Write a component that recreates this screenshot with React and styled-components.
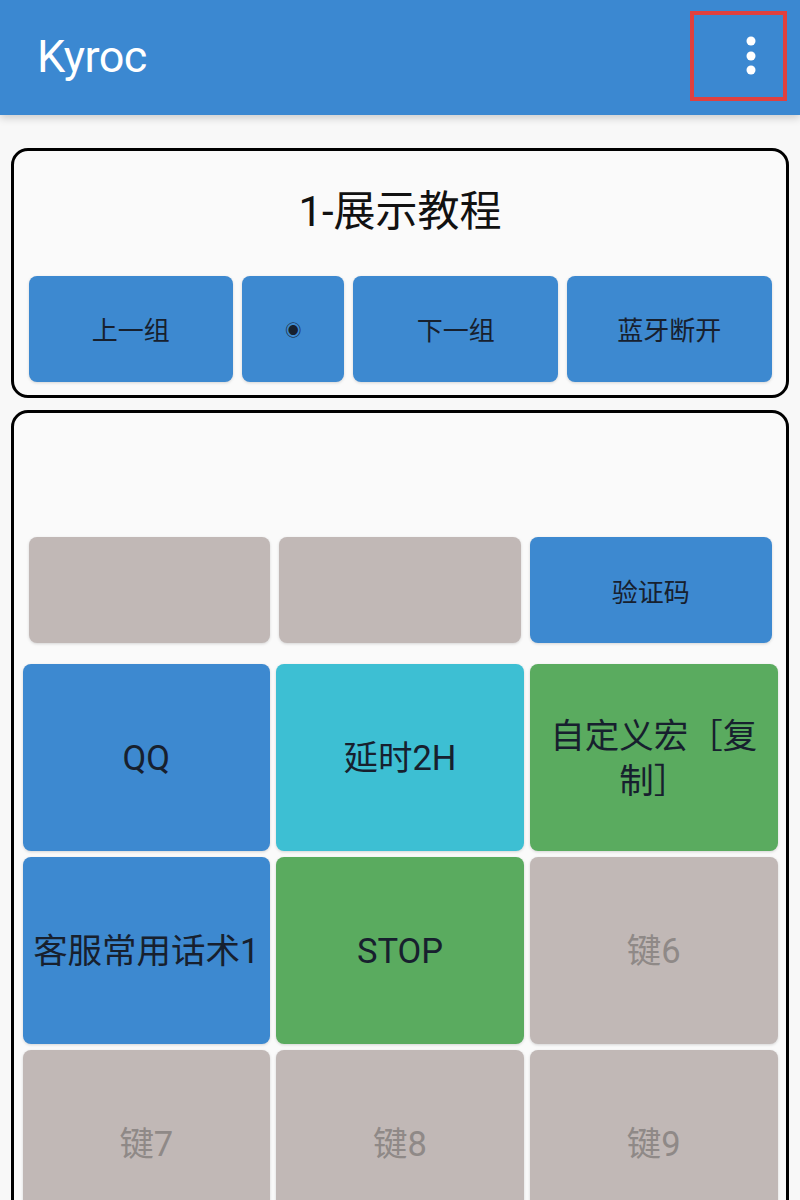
import styled, { createGlobalStyle } from "styled-components"

const GlobalStyle = createGlobalStyle`
  html, body {
    margin: 0;
    padding: 0;
    background: #f8f8f8;
    font-family: Roboto, "Noto Sans CJK SC", sans-serif;
  }
  body { overflow: hidden; height: 1200px; }
`

const colors = {
  blue: "#3d89d0",
  cyan: "#3dbfd3",
  green: "#5aab5f",
  gray: "#c1b8b6",
}

const topButtons = [
  { text: "上一组", grow: 2 },
  { text: "◉", grow: 1, small: true },
  { text: "下一组", grow: 2 },
  { text: "蓝牙断开", grow: 2 },
]

const shortcutRow = [
  { text: "", color: "gray" },
  { text: "", color: "gray" },
  { text: "验证码", color: "blue" },
]

const keys = [
  { text: "QQ", color: "blue" },
  { text: "延时2H", color: "cyan" },
  { text: "自定义宏［复制］", color: "green" },
  { text: "客服常用话术1", color: "blue" },
  { text: "STOP", color: "green" },
  { text: "键6", color: "gray", muted: true },
  { text: "键7", color: "gray", muted: true },
  { text: "键8", color: "gray", muted: true },
  { text: "键9", color: "gray", muted: true },
]

const MoreIcon = () => (
  <svg width="14" height="42" viewBox="0 0 14 42">
    <circle cx="7" cy="6" r="4.5" fill="#fff" />
    <circle cx="7" cy="21" r="4.5" fill="#fff" />
    <circle cx="7" cy="35" r="4.5" fill="#fff" />
  </svg>
)

const App = () => {
  return (
    <>
      <GlobalStyle />
      <AppBar>
        <Title>Kyroc</Title>
        <MenuButton><MoreIcon /></MenuButton>
      </AppBar>

      <Panel>
        <GroupTitle>1-展示教程</GroupTitle>
        <ButtonRow>
          {topButtons.map((b, i) => (
            <NavButton key={i} $grow={b.grow} $small={b.small}>{b.text}</NavButton>
          ))}
        </ButtonRow>
      </Panel>

      <Panel $open>
        <Spacer />
        <ShortcutRow>
          {shortcutRow.map((b, i) => (
            <ShortcutButton key={i} $color={b.color}>{b.text}</ShortcutButton>
          ))}
        </ShortcutRow>
        <KeyGrid>
          {keys.map((k, i) => (
            <KeyButton key={i} $color={k.color} $muted={k.muted}>{k.text}</KeyButton>
          ))}
        </KeyGrid>
      </Panel>
    </>
  )
}

const AppBar = styled.header`
  display: flex;
  align-items: center;
  justify-content: space-between;
  height: 115px;
  padding: 0 13px 0 37px;
  box-sizing: border-box;
  background: #3b88d1;
  box-shadow: 0 3px 8px rgba(0, 0, 0, 0.18);
`

const Title = styled.h1`
  margin: 0;
  color: #fff;
  font-family: Roboto, sans-serif;
  font-size: 45px;
  font-weight: 400;
  letter-spacing: -0.6px;
  padding-bottom: 2px;
`

const MenuButton = styled.div`
  display: flex;
  align-items: center;
  justify-content: center;
  width: 97px;
  height: 90px;
  box-sizing: border-box;
  padding-left: 24px;
  border: 4px solid #e0403f;
  margin-top: -3px;
`

const Panel = styled.section`
  margin: ${p => (p.$open ? "12px" : "33px")} 11px 0;
  background: #fafafa;
  border: 3.5px solid #000;
  border-radius: 17px;
  padding: ${p => (p.$open ? "0 8.5px 0" : "0 14.5px 13px")};
  ${p => p.$open && "height: 900px;"}
`

const GroupTitle = styled.div`
  text-align: center;
  font-size: 42px;
  line-height: 52px;
  color: #111;
  padding: 35px 0 37.5px;
`

const ButtonRow = styled.div`
  display: flex;
  gap: 9px;
`

const NavButton = styled.div`
  flex: ${p => p.$grow} 1 0;
  height: 106px;
  display: flex;
  align-items: center;
  justify-content: center;
  background: ${colors.blue};
  border-radius: 8px;
  box-shadow: 0 1px 3px rgba(0, 0, 0, 0.15);
  color: #17202e;
  font-size: ${p => (p.$small ? "16px" : "26px")};
`

const Spacer = styled.div`
  height: 124.5px;
`

const ShortcutRow = styled.div`
  display: grid;
  grid-template-columns: repeat(3, 1fr);
  gap: 9px;
  padding: 0 6px;
  margin-bottom: 21px;
`

const ShortcutButton = styled.div`
  height: 106px;
  display: flex;
  align-items: center;
  justify-content: center;
  background: ${p => colors[p.$color]};
  border-radius: 8px;
  box-shadow: 0 1px 3px rgba(0, 0, 0, 0.15);
  color: #17202e;
  font-size: 26px;
`

const KeyGrid = styled.div`
  display: grid;
  grid-template-columns: repeat(3, 1fr);
  grid-auto-rows: 187px;
  gap: 6px;
`

const KeyButton = styled.div`
  display: flex;
  align-items: center;
  justify-content: center;
  text-align: center;
  padding: 2px 8px 0;
  background: ${p => colors[p.$color]};
  border-radius: 8px;
  box-shadow: 0 1px 3px rgba(0, 0, 0, 0.15);
  color: ${p => (p.$muted ? "#8f8987" : "#17202e")};
  font-size: 34.5px;
  line-height: 45px;
  line-break: strict;
`

export default App
